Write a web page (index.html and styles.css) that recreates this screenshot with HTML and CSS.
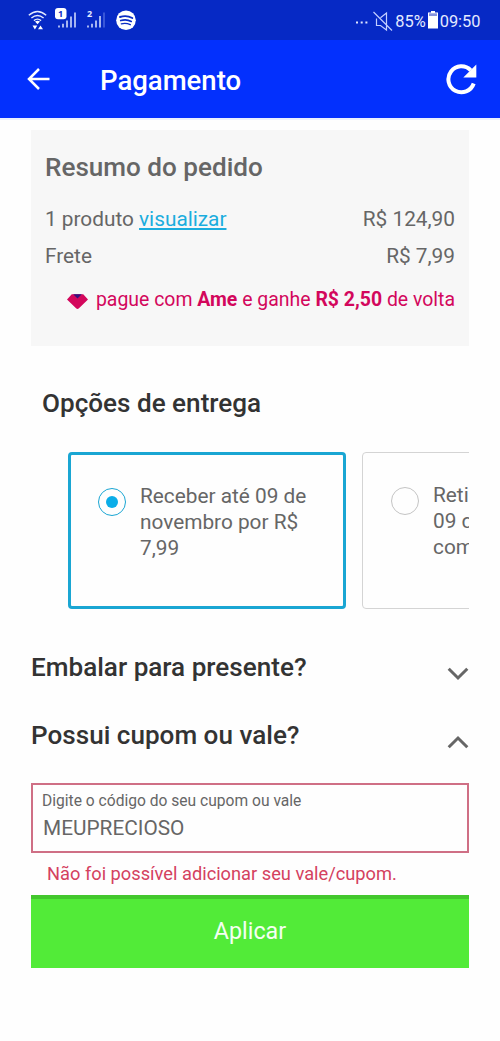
FILE: index.html
```html
<!DOCTYPE html>
<html lang="pt-BR">
<head>
<meta charset="utf-8">
<title>Pagamento</title>
<link rel="stylesheet" href="styles.css">
</head>
<body>
<div class="status">
  <svg class="status-left" width="140" height="40" viewBox="0 0 140 40">
    <g fill="none" stroke="#e4ebff" stroke-width="1.4">
      <path d="M28.8 15.2Q37.5 7.8 46.2 15.2M31.4 18Q37.5 13 43.600 18M33.900 20.600Q37.500 17.600 41.100 20.600"/>
    </g>
    <path d="M35 21.500Q37.500 20 40 21.500L37.500 24.300ZM32.500 25.600H37.300L34.900 29.400ZM38 29.200H43L40.500 25.600Z" fill="#fff"/>
    <g stroke="#dce4ff" stroke-width="1.5">
      <path d="M59 25.500V27.500M63 23.800V27.500M67 20.500V27.500M71 16.500V27.500M75 12.500V27.500"/>
      <path d="M88 25.500V27.500M92 23.800V27.500M96 20.500V27.500M100 16V27.500"/>
      <path d="M104 12.500V27.500" stroke="#4a66dc"/>
    </g>
    <rect x="55" y="8" width="11.500" height="11.300" rx="3" fill="#fff"/>
    <text class="sim sim-one" x="58" y="17">1</text>
    <text class="sim" x="87" y="17">2</text>
    <circle cx="126" cy="20.300" r="9.800" fill="#fff"/>
    <g fill="none" stroke="#0a2cc4" stroke-linecap="round">
      <path d="M120 17Q126.500 14.800 132.300 18" stroke-width="1.900"/>
      <path d="M120.700 20.600Q126.500 18.800 131.300 21.500" stroke-width="1.600"/>
      <path d="M121.300 23.800Q126 22.500 130.300 24.700" stroke-width="1.300"/>
    </g>
  </svg>
  <div class="status-right">
    <svg width="38" height="24" viewBox="0 0 38 24">
      <g fill="#dfe6ff"><rect x="0" y="12.500" width="2" height="2"/><rect x="4.700" y="12.500" width="2" height="2"/><rect x="9.400" y="12.500" width="2" height="2"/></g>
      <path d="M20.500 9.500V16.500H24.500L30.500 21V4L24.500 8.800M17.500 3L36 21.500" fill="none" stroke="#c3ceff" stroke-width="1.200"/>
    </svg>
    <span class="percent">85%</span>
    <svg class="battery" width="10" height="18" viewBox="0 0 10 18"><path d="M3 0H7V1.500H10V17.500H0V1.500H3Z" fill="#fff"/><path d="M1 2.300H9V5H1Z" fill="#8794de"/></svg>
    <span>09:50</span>
  </div>
</div>
<header class="bar">
  <svg class="back" width="23" height="24" viewBox="0 0 23 24"><path d="M12 2L2 12L12 22M2.500 12H22.500" fill="none" stroke="#fff" stroke-width="2.500"/></svg>
  <h1 class="bar-title">Pagamento</h1>
  <svg class="reload" width="31" height="32" viewBox="0 0 31 32"><path d="M27.700 20.500A13 13 0 1 1 24.800 7.300" fill="none" stroke="#fff" stroke-width="4"/><path d="M30.300 1.500V14.500H17.300Z" fill="#fff"/></svg>
</header>
<main class="page">
  <section class="summary">
    <h2 class="summary-title">Resumo do pedido</h2>
    <div class="row"><span>1 produto <a class="link">visualizar</a></span><span>R$ 124,90</span></div>
    <div class="row"><span>Frete</span><span>R$ 7,99</span></div>
    <div class="cashback">
      <svg class="gem" width="21" height="16" viewBox="0 0 22 16"><path d="M5 0H17L22 5.500L12.500 14.500Q11 16 9.500 14.500L0 5.500Z" fill="#d3075c"/><path d="M6.500 0H15.500L11 4.300Z" fill="#34127e"/></svg>
      <span>pague com <b>Ame</b> e ganhe <b>R$ 2,50</b> de volta</span>
    </div>
  </section>
  <h2 class="heading delivery-title">Opções de entrega</h2>
  <div class="options">
    <div class="option selected"><i class="radio"></i><p>Receber até 09 de<br>novembro por R$<br>7,99</p></div>
    <div class="option"><i class="radio"></i><p>Reti<br>09 de<br>com</p></div>
  </div>
  <div class="accordion gift"><h2 class="heading">Embalar para presente?</h2>
    <svg width="22" height="14" viewBox="0 0 22 14"><path d="M1.700 1.700L11 11L20.300 1.700" fill="none" stroke="#666" stroke-width="3"/></svg></div>
  <div class="accordion coupon"><h2 class="heading">Possui cupom ou vale?</h2>
    <svg width="22" height="14" viewBox="0 0 22 14"><path d="M1.700 12.300L11 3L20.300 12.300" fill="none" stroke="#666" stroke-width="3"/></svg></div>
  <div class="field"><span class="label">Digite o código do seu cupom ou vale</span><span class="value">MEUPRECIOSO</span></div>
  <p class="error">Não foi possível adicionar seu vale/cupom.</p>
  <button class="apply">Aplicar</button>
</main>
</body>
</html>
```
FILE: styles.css
```css
* { box-sizing: border-box; }
body { margin: 0; height: 1041px; background: #fefefe; color: #666; font-family: Roboto, "Liberation Sans", sans-serif; font-size: 20.800px; overflow: hidden; }
h1, h2, p { margin: 0; }
svg { flex: none; display: block; }

.status { height: 40px; background: #0629c5; display: flex; justify-content: space-between; }
.sim { font: 700 9px "Noto Sans", sans-serif; fill: #e4ebff; }
.sim-one { fill: #0a2cc4; }
.status-right { display: flex; align-items: center; padding: 2px 19.500px 0 0; color: #e4eaff; font-size: 16.400px; white-space: nowrap; }
.percent { margin-left: 1px; }
.battery { margin: 0 2px 2px 2px; }

.bar { height: 78px; background: #0330fd; display: flex; align-items: center; padding: 0 23px 0 27px; }
.bar-title { margin: 4px 0 0 50px; flex: 1; color: #fff; font-size: 27.500px; font-weight: 500; line-height: 40px; }

.page { padding: 10px 31px 0; border-top: 2px solid #eaf1ff; }
.summary { height: 216px; padding: 17px 14px 0; background: #f7f7f7; margin-bottom: 37px; }
.summary-title { font-size: 26.100px; font-weight: 500; line-height: 40px; margin-bottom: 14px; white-space: nowrap; }
.row { display: flex; justify-content: space-between; line-height: 36.500px; }
.link { color: #1badde; text-decoration: underline; }
.cashback { display: flex; justify-content: flex-end; align-items: center; gap: 8px; margin-top: 11px; line-height: 30px; color: #d3075c; font-size: 19.450px; white-space: nowrap; }
.gem { margin-top: 3px; }

.heading { color: #333; font-size: 26.100px; font-weight: 500; line-height: 40px; white-space: nowrap; }
.delivery-title { padding-left: 11px; }
.options { display: flex; gap: 16px; margin-top: 29px; padding-left: 37px; overflow: hidden; }
.option { flex: none; width: 278px; height: 157px; padding: 29px 0 0 28px; display: flex; gap: 14px; border: 1.500px solid #d4d4d4; border-radius: 4px; line-height: 26px; white-space: nowrap; }
.selected { border: 3px solid #1aa6d3; padding: 28px 0 0 27px; }
.radio { flex: none; width: 28px; height: 28px; margin-top: 5px; border: 1.500px solid #c4c4c4; border-radius: 50%; display: grid; place-items: center; }
.selected .radio { border-color: #1aa6d3; }
.selected .radio::after { content: ""; width: 12px; height: 12px; border-radius: 50%; background: #0bade8; }

.accordion { display: flex; justify-content: space-between; align-items: center; height: 40px; }
.accordion svg { margin-top: 14px; }
.gift { margin-top: 38px; }
.coupon { margin-top: 28px; }
.field { height: 70px; margin-top: 28px; padding: 4px 9px; border: 2px solid #cf6f85; display: flex; flex-direction: column; }
.label { font-size: 15.600px; line-height: 24px; }
.value { line-height: 30px; padding-left: 1px; }
.error { height: 42px; padding: 6px 0 0 16px; color: #d4415f; font-size: 18.250px; line-height: 30px; white-space: nowrap; }
.apply { display: block; width: 100%; height: 73px; padding: 0 0 5px; border: 0; border-top: 4px solid #43c72d; background: #52eb38; color: #f4fff2; font: 400 23.300px Roboto, sans-serif; }
```
